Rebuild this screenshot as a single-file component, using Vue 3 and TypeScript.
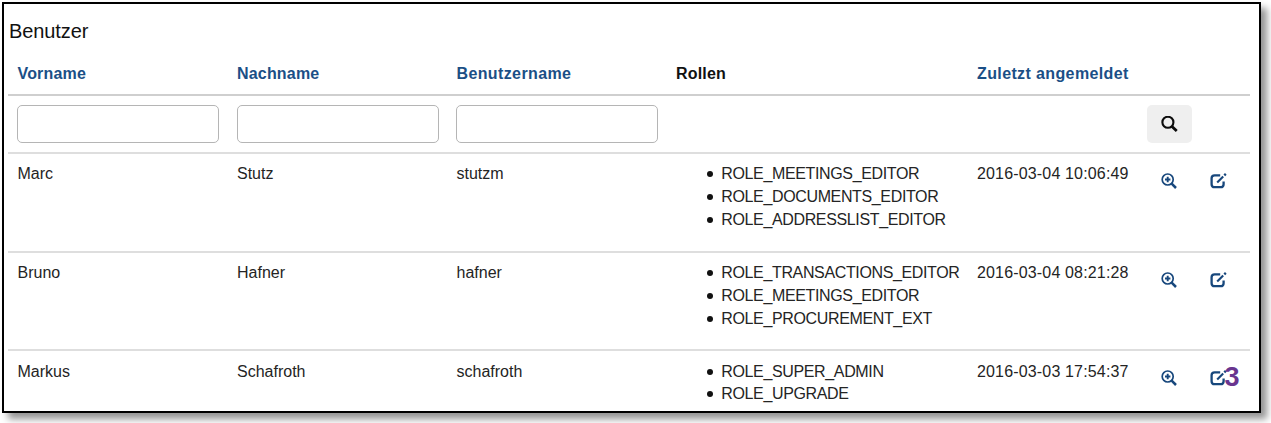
<script setup lang="ts">
interface User {
  first: string
  last: string
  login: string
  roles: string[]
  seen: string
}

const users: User[] = [
  {
    first: 'Marc',
    last: 'Stutz',
    login: 'stutzm',
    roles: ['ROLE_MEETINGS_EDITOR', 'ROLE_DOCUMENTS_EDITOR', 'ROLE_ADDRESSLIST_EDITOR'],
    seen: '2016-03-04 10:06:49',
  },
  {
    first: 'Bruno',
    last: 'Hafner',
    login: 'hafner',
    roles: ['ROLE_TRANSACTIONS_EDITOR', 'ROLE_MEETINGS_EDITOR', 'ROLE_PROCUREMENT_EXT'],
    seen: '2016-03-04 08:21:28',
  },
  {
    first: 'Markus',
    last: 'Schafroth',
    login: 'schafroth',
    roles: ['ROLE_SUPER_ADMIN', 'ROLE_UPGRADE'],
    seen: '2016-03-03 17:54:37',
  },
]
</script>

<template>
  <main class="panel">
    <h1 class="title">Benutzer</h1>
    <div class="table">
      <div class="row head">
        <a class="th">Vorname</a>
        <a class="th">Nachname</a>
        <a class="th wide">Benutzername</a>
        <span class="th plain">Rollen</span>
        <a class="th wide">Zuletzt angemeldet</a>
      </div>
      <div class="row filters">
        <div class="cell"><input class="field" type="text" aria-label="Vorname" /></div>
        <div class="cell"><input class="field" type="text" aria-label="Nachname" /></div>
        <div class="cell"><input class="field" type="text" aria-label="Benutzername" /></div>
        <div></div>
        <div></div>
        <div class="cell">
          <button class="search" aria-label="Suchen">
            <svg width="17" height="17" viewBox="0 0 16 16" fill="none" stroke="#0c0c0c">
              <circle cx="6.5" cy="5.9" r="5.2" stroke-width="2" />
              <path d="M10.1 9.6 14.8 14.1" stroke-width="2.7" />
            </svg>
          </button>
        </div>
      </div>
      <div v-for="(user, i) in users" :key="user.login" class="row user">
        <div class="cell">{{ user.first }}</div>
        <div class="cell">{{ user.last }}</div>
        <div class="cell">{{ user.login }}</div>
        <ul class="roles">
          <li v-for="role in user.roles" :key="role">{{ role }}</li>
        </ul>
        <div class="cell seen">{{ user.seen }}</div>
        <div class="action">
          <svg width="16" height="16" viewBox="0 0 16 16" fill="none" stroke="#17477c">
            <circle cx="6.7" cy="6.5" r="5.5" stroke-width="1.7" />
            <path d="M10.4 10.4 15 15" stroke-width="2.5" />
            <path d="M6.7 3.8V9.2M4 6.5H9.4" stroke-width="1.9" />
          </svg>
        </div>
        <div class="action edit">
          <svg width="17" height="16" viewBox="0 0 17 16" fill="none" stroke="#17477c">
            <path d="M10.2 2.3H4.6Q1.6 2.3 1.6 5.3V11.2Q1.6 14.2 4.6 14.2H10.6Q13.6 14.2 13.6 11.2V8.6" stroke-width="2.3" />
            <path d="M7.2 9.5 13.2 3.5" stroke-width="2.1" />
            <path d="M14.3 2.4 15.8 0.9" stroke-width="2.3" />
          </svg>
          <b v-if="i === 2" class="marker">3</b>
        </div>
      </div>
    </div>
  </main>
</template>

<style>
html,
body {
  height: 100%;
  background: #fff;
}

#app {
  display: flow-root;
  height: 100%;
  overflow: hidden;
}
</style>

<style scoped>
.panel {
  box-sizing: border-box;
  width: 1259px;
  height: 411px;
  margin: 2px;
  padding: 14px 9px 0 5px;
  overflow: hidden;
  border: 2px solid #000;
  background: #fff;
  box-shadow: 6px 6px 7px rgba(0, 0, 0, 0.42);
  color: #242424;
  font: 16px/22.8px 'Liberation Sans', Arial, sans-serif;
}

.title {
  height: 33px;
  margin: 0;
  color: #111;
  font-size: 20px;
  font-weight: 400;
  line-height: 27px;
  letter-spacing: -0.1px;
}

.table {
  width: 1242px;
  margin-left: -1px;
}

.row {
  display: grid;
  grid-template-columns: 219.5px 219.5px 219.5px 301px 170px 63px 50px;
  box-sizing: border-box;
}

.head {
  height: 45px;
  padding-top: 12px;
  border-bottom: 2px solid #cfcfcf;
}

.th {
  padding-left: 9.5px;
  color: #1b4f86;
  font-weight: 700;
  letter-spacing: 0.18px;
  white-space: nowrap;
}

.wide {
  letter-spacing: 0.38px;
}

.plain {
  color: #111;
}

.filters {
  height: 56px;
  padding-top: 9px;
}

.cell {
  padding: 0 9px;
  white-space: nowrap;
}

.user .cell {
  padding-left: 9.5px;
}

.user .seen {
  letter-spacing: 0.16px;
}

.field {
  display: block;
  box-sizing: border-box;
  width: 202px;
  height: 38px;
  padding: 0 12px;
  border: 1px solid #b5b5b5;
  border-radius: 5px;
  background: #fff;
  font: inherit;
}

.search {
  display: flex;
  align-items: center;
  justify-content: center;
  width: 45px;
  height: 38px;
  padding: 0;
  border: 0;
  border-radius: 5px;
  background: #efefef;
}

.user {
  height: 98.7px;
  padding-top: 9.3px;
  border-top: 2px solid #dedede;
}

.roles {
  margin: 0;
  padding: 0 0 0 54.5px;
  list-style: none;
  letter-spacing: -0.36px;
  white-space: nowrap;
}

.roles li::before {
  content: '';
  display: inline-block;
  width: 6px;
  height: 6px;
  margin: 0 8.3px 2px -14px;
  border-radius: 50%;
  background: #111;
}

.action {
  display: flex;
  align-items: flex-start;
  padding: 9.7px 0 0 23px;
}

.edit {
  position: relative;
  padding-left: 9px;
}

.marker {
  position: absolute;
  top: 3px;
  left: 24px;
  color: #69358f;
  font-size: 27px;
  line-height: 27px;
}
</style>
